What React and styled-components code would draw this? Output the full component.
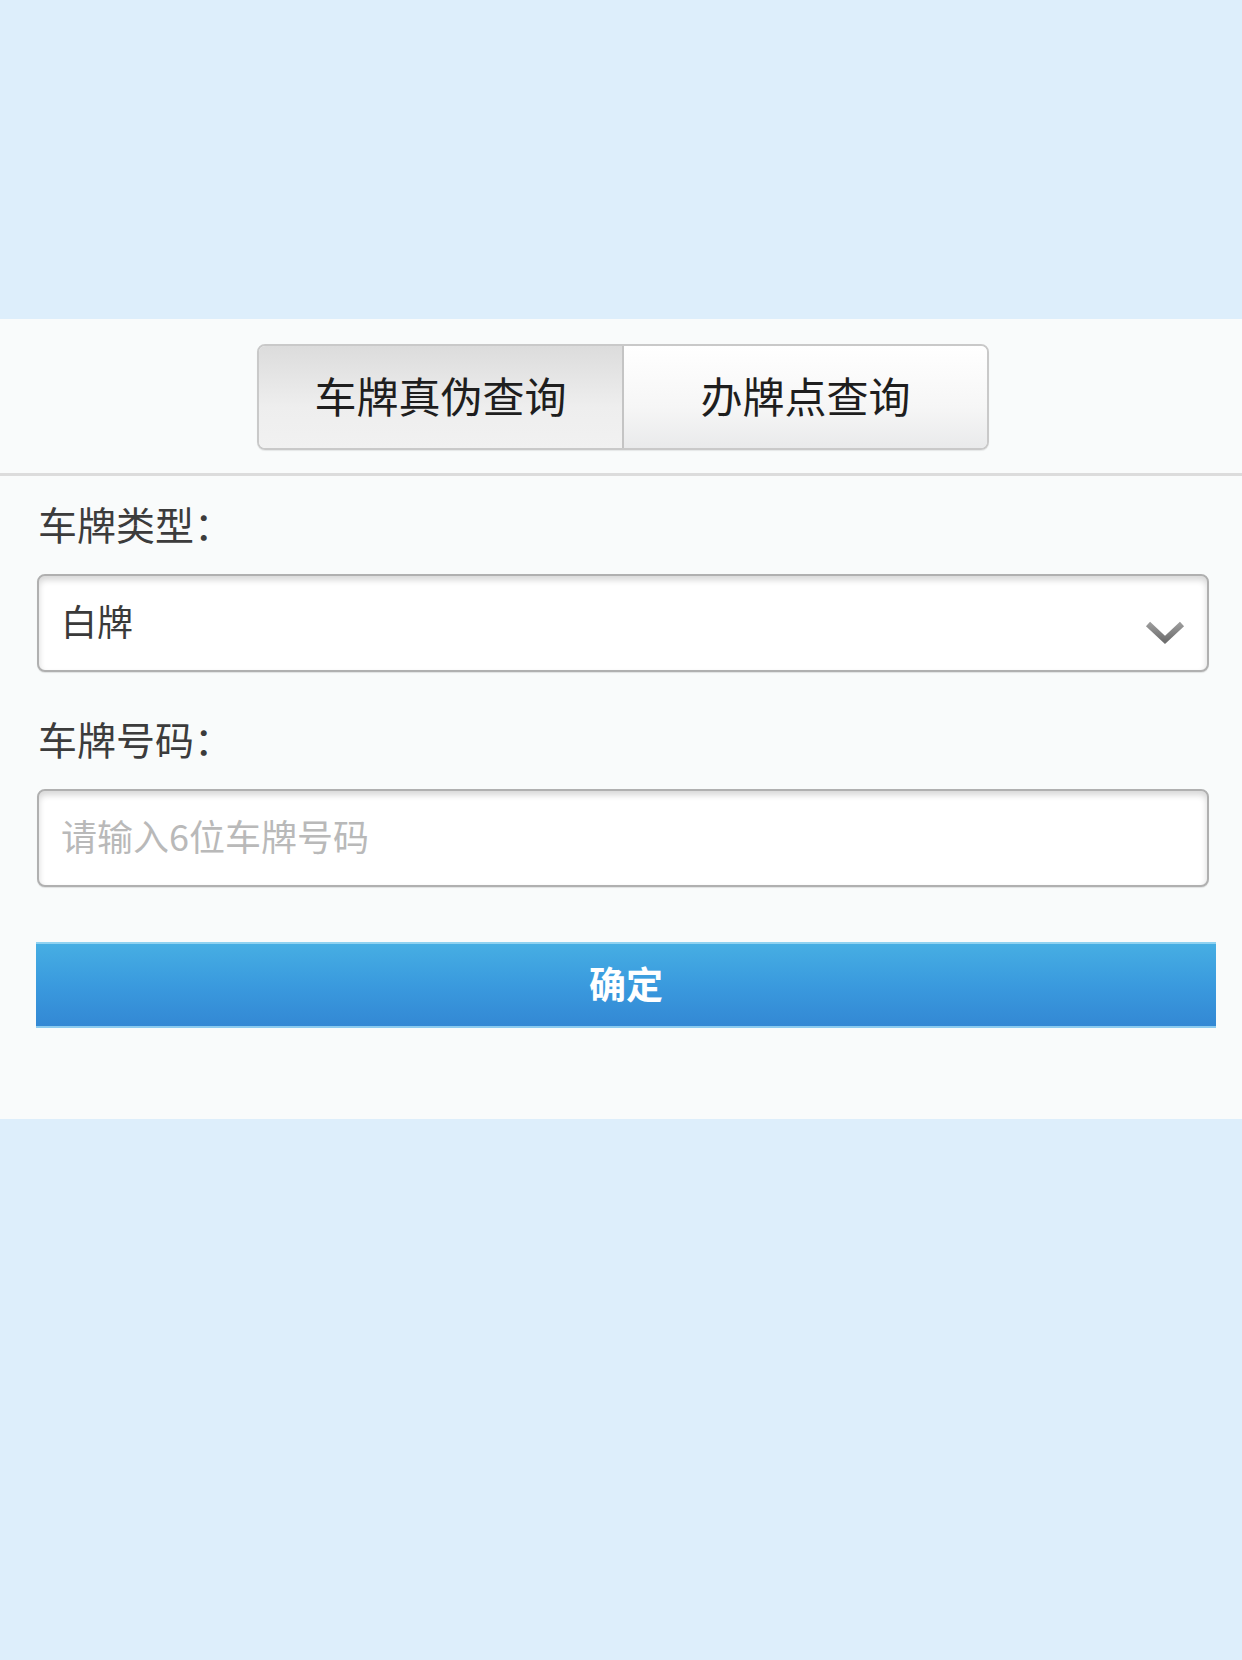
import React from "react";
import styled, { createGlobalStyle } from "styled-components";

const Global = createGlobalStyle`
  html, body { margin: 0; padding: 0; }
  body {
    background: #ddeefb;
    font-family: "Noto Sans CJK SC", "Noto Sans", sans-serif;
  }
  * { box-sizing: border-box; }
`;

const Page = styled.div`
  padding-top: 319px;
  min-height: 1660px;
`;

const Panel = styled.div`
  background: #f9fbfb;
  height: 800px;
`;

const TabBar = styled.div`
  display: flex;
  justify-content: center;
  padding: 25px 0 23px 4px;
  border-bottom: 3px solid #dcdcdc;
`;

const TabGroup = styled.div`
  display: flex;
  width: 732px;
  height: 106px;
  border: 2px solid #c9c9c9;
  border-radius: 8px;
  overflow: hidden;
  box-shadow: 0 1px 1px rgba(0, 0, 0, 0.08);
`;

const Tab = styled.div`
  flex: 1;
  display: flex;
  align-items: center;
  justify-content: center;
  padding-bottom: 5px;
  font-size: 42px;
  color: #1e1e1e;
  background: ${(p) =>
    p.$active
      ? "linear-gradient(#dcdcdc, #eeeeee 60%, #f1f1f1)"
      : "linear-gradient(#ffffff, #f6f6f6 60%, #e9eaeb)"};
  & + & {
    border-left: 2px solid #c4c4c4;
  }
`;

const Form = styled.div`
  padding: 23px 26px 0 36px;
  display: flex;
  flex-direction: column;
`;

const Label = styled.div`
  height: 48px;
  line-height: 48px;
  font-size: 39px;
  color: #3c3c3c;
  padding-left: 2px;
  margin-top: ${(p) => p.$top || 0}px;
  margin-bottom: 27px;
`;

const FieldBox = styled.div`
  position: relative;
  width: calc(100% - 8px);
  margin-left: 1px;
  height: 98px;
  border: 2px solid #b0b0b0;
  border-radius: 8px;
  background: #ffffff;
  box-shadow: inset 0 4px 6px rgba(0, 0, 0, 0.16), 0 1px 1px rgba(0, 0, 0, 0.1);
  display: flex;
  align-items: center;
  padding: 0 22px 6px;
  font-size: 36px;
  color: ${(p) => (p.$placeholder ? "#b9b9b9" : "#3a3a3a")};
`;

const Chevron = styled.svg`
  position: absolute;
  right: 22px;
  top: 44px;
`;

const Submit = styled.div`
  margin-top: 55px;
  height: 86px;
  display: flex;
  align-items: center;
  justify-content: center;
  padding-bottom: 4px;
  font-size: 37px;
  font-weight: bold;
  color: #ffffff;
  background: linear-gradient(#46aee3, #3a9ade 50%, #3388d4);
  border-top: 2px solid #8fd2f1;
  border-bottom: 2px solid #8ccbef;
`;

export default function App() {
  return (
    <>
      <Global />
      <Page>
        <Panel>
          <TabBar>
            <TabGroup>
              <Tab $active>车牌真伪查询</Tab>
              <Tab>办牌点查询</Tab>
            </TabGroup>
          </TabBar>
          <Form>
            <Label>车牌类型：</Label>
            <FieldBox>
              白牌
              <Chevron width="40" height="26" viewBox="0 0 40 26">
                <defs>
                  <linearGradient id="chev" x1="0" y1="0" x2="0" y2="1">
                    <stop offset="0" stopColor="#9a9a9a" />
                    <stop offset="1" stopColor="#707070" />
                  </linearGradient>
                </defs>
                <path
                  d="M3 4 L20 20 L37 4"
                  fill="none"
                  stroke="url(#chev)"
                  strokeWidth="6"
                  strokeLinecap="butt"
                  strokeLinejoin="miter"
                />
              </Chevron>
            </FieldBox>
            <Label $top={42}>车牌号码：</Label>
            <FieldBox $placeholder>请输入6位车牌号码</FieldBox>
            <Submit>确定</Submit>
          </Form>
        </Panel>
      </Page>
    </>
  );
}
